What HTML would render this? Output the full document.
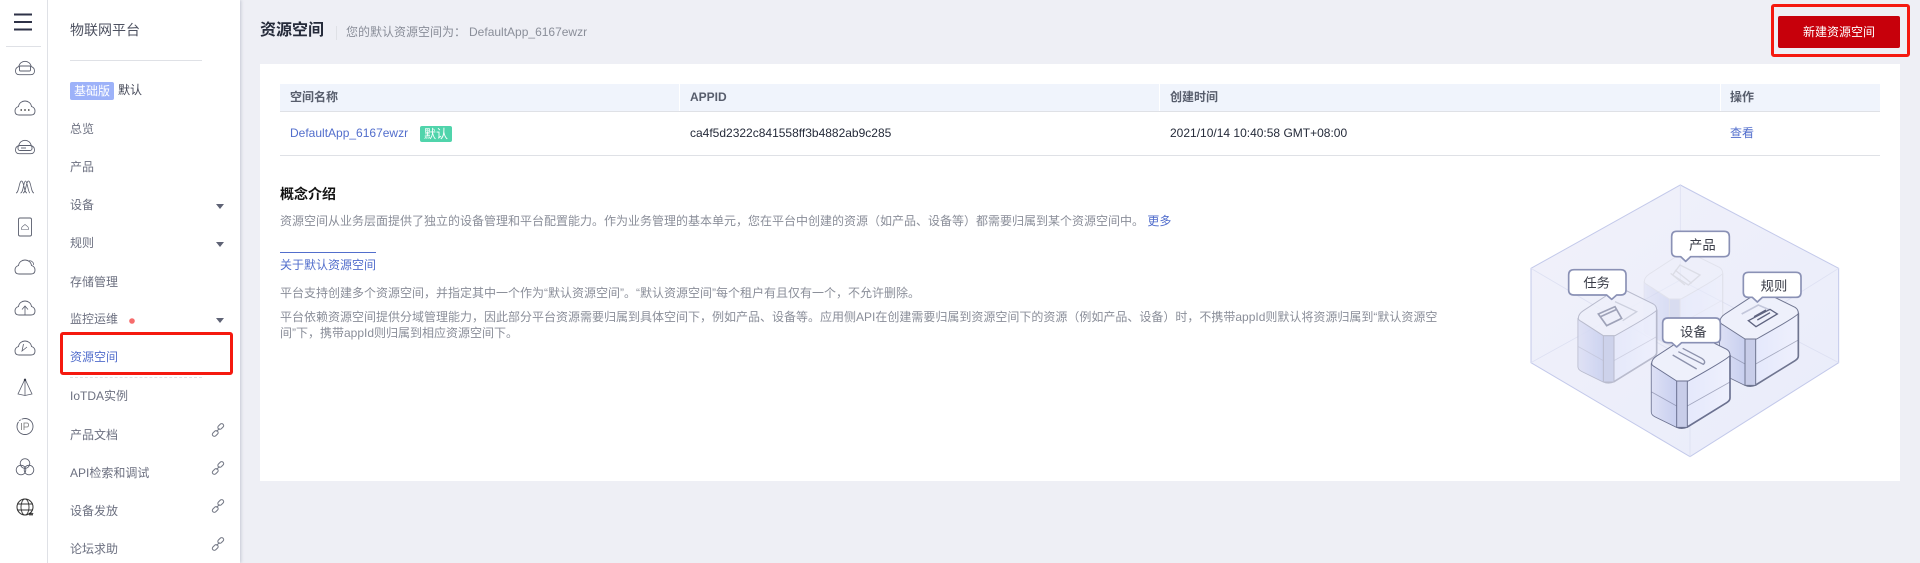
<!DOCTYPE html>
<html lang="zh-CN"><head><meta charset="utf-8"><title>资源空间</title>
<style>
html,body{margin:0;padding:0;width:1920px;height:563px;overflow:hidden;background:#eeeff5;font-family:"Liberation Sans","Noto Sans CJK SC",sans-serif;font-size:12px;color:#575d6c}
.a{position:absolute;white-space:nowrap;line-height:16px;height:16px}
.n{left:70px;color:#6c7080}
.b{position:absolute}
.g{color:#8a8e99}
.l{color:#526ecc}
.h{color:#575d6c;font-weight:bold}
.r{box-sizing:border-box;border:3px solid #f5190f;border-radius:3px}
svg{position:absolute;overflow:visible}
</style></head><body>
<div class="b" style="left:0;top:0;width:240px;height:563px;background:#fff;box-shadow:1px 0 3px rgba(120,125,150,.35)"></div>
<div class="b" style="left:47px;top:0;width:1px;height:563px;background:#dfe1e6"></div>
<div class="b" style="left:6px;top:46px;width:35px;height:1px;background:#dfe1e6"></div>
<svg style="left:0;top:0" width="48" height="563" fill="none" stroke="#5b5f6e" stroke-width=".9">
<defs><path id="c" d="M-6 7H6C9 7 10 5 10 3 10 0 8-1 6.5-1.500 6-5 3-7 0-7-3-7-6-5-6.500-1.500-8-1-10 0-10 3-10 5-9 7-6 7Z"/></defs>
<path d="M14 14.500H32M14 22H32M14 29.500H32" stroke="#2e3247" stroke-width="2"/>
<g transform="translate(25,68)"><use href="#c" transform="scale(.95)"/><rect x="-5.500" y="-2" width="11" height="5" rx="1"/></g>
<g transform="translate(25,108)"><use href="#c"/><path d="M-4.500 2h1.500M-.8 2h1.600M3 2h1.500" stroke-width="1.600" stroke="#444"/></g>
<g transform="translate(25,147)"><use href="#c" transform="scale(.95)"/><rect x="-7" y="-1.500" width="14" height="5" rx="2" fill="#fff"/><path d="M-4 1h5"/></g>
<path d="M16 193C19 193 19 181 21.500 181S24 193 27 193M20.500 193C23.500 193 23.500 181 25.500 181S28 193 30 193M23 193C26 193 26 181 28.500 181S31 193 34 193" stroke-width=".8"/>
<g><rect x="18.500" y="218" width="13" height="18" rx="1.500"/><path d="M21.500 229.500H28.500C29 227 27 226 25 224.500 23 226 21 227 21.500 229.500Z" stroke-width=".6"/></g>
<g transform="translate(25,267)"><use href="#c"/><path d="M3-6C7-7 9-4 8.500-2" stroke-width=".7"/></g>
<g transform="translate(25,308)"><use href="#c"/><path d="M-3 1.500 0-2 3 1.500M0-2V7" stroke-width=".8"/></g>
<g transform="translate(25,348)"><use href="#c"/><path d="M-1.500-4-3 3 2-1" stroke-width=".8"/></g>
<path d="M25 379 18 394 25 395.500 32 394ZM25 379V395.500" stroke-width=".8"/><circle cx="25" cy="380" r="1.200" fill="#3a3e4c" stroke="none"/>
<circle cx="25" cy="426.500" r="8" stroke-width=".9" stroke-dasharray="30 1 2 1"/><path d="M21.500 423V430M24 430V423H27C29 423 29 427 27 427H24" stroke-width=".8" stroke="#777"/>
<circle cx="25" cy="463.500" r="4.800"/><circle cx="21" cy="470" r="4.800"/><circle cx="29" cy="470" r="4.800"/>
<circle cx="25" cy="507" r="8" stroke="#333" stroke-width="1"/><ellipse cx="25" cy="507" rx="4" ry="8" stroke="#333"/><path d="M17 504H33M17 510H33" stroke="#333"/><path d="M29 513l1 2 1-2 1 2 1-2" stroke="#222" stroke-width="1"/>
</svg>

<div class="a" style="left:70px;top:22px;font-size:14px;color:#4d5160">物联网平台</div>
<div class="b" style="left:70px;top:60px;width:132px;height:1px;background:#dfe1e6"></div>
<div class="a" style="left:70px;top:82px;width:44px;height:18px;line-height:18px;text-align:center;background:#9db2f9;border-radius:2px;color:#fff">基础版</div>
<div class="a" style="left:118px;top:82px;color:#444857">默认</div>
<div class="a n" style="top:121px">总览</div>
<div class="a n" style="top:159px">产品</div>
<div class="a n" style="top:197px">设备</div>
<div class="a n" style="top:235px">规则</div>
<div class="a n" style="top:274px">存储管理</div>
<div class="a n" style="top:311px">监控运维</div>
<div class="a n l" style="top:349px">资源空间</div>
<div class="b" style="left:70px;top:377px;width:132px;border-top:1px dashed #dfe1e6"></div>
<div class="a n" style="top:388px">IoTDA实例</div>
<div class="a n" style="top:427px">产品文档</div>
<div class="a n" style="top:465px">API检索和调试</div>
<div class="a n" style="top:503px">设备发放</div>
<div class="a n" style="top:541px">论坛求助</div>
<svg style="left:0;top:0" width="240" height="563" fill="#5f6375">
<path d="M216 204H224L220 209ZM216 242H224L220 247ZM216 318H224L220 323Z"/>
<circle cx="132" cy="321" r="2.800" fill="#f66c6c"/>
<defs><g id="k" fill="none" stroke="#777b88" stroke-width="1.100"><rect x="-.5" y="-5.500" width="6.500" height="4" rx="2" transform="rotate(-45 2.750 -3.500)"/><rect x="-6" y="1.500" width="6.500" height="4" rx="2" transform="rotate(-45 -2.750 3.500)"/><path d="M-1.500 1.500 1.500-1.500"/></g></defs>
<use href="#k" x="218" y="430"/><use href="#k" x="218" y="468"/><use href="#k" x="218" y="506"/><use href="#k" x="218" y="544"/>
</svg>
<div class="b r" style="left:60px;top:332px;width:173px;height:43px"></div>

<div class="a" style="left:260px;top:21px;height:20px;line-height:20px;font-size:16px;font-weight:bold;color:#252b3a">资源空间</div>
<div class="b" style="left:336px;top:26px;width:1px;height:14px;background:#dfe1e6"></div>
<div class="a g" style="left:346px;top:24px">您的默认资源空间为：<span style="margin-left:3px">DefaultApp_6167ewzr</span></div>
<div class="b r" style="left:1771px;top:4px;width:139px;height:53px"></div>
<div class="a" style="left:1778px;top:16px;width:122px;height:32px;line-height:32px;background:#c7000b;border-radius:2px;color:#fff;text-align:center">新建资源空间</div>

<div class="b" style="left:260px;top:64px;width:1640px;height:417px;background:#fff"></div>
<div class="b" style="left:280px;top:84px;width:1600px;height:27px;background:#f0f4fc;border-bottom:1px solid #dfe1e6"></div>
<div class="b" style="left:679px;top:84px;width:1px;height:27px;background:#fff"></div>
<div class="b" style="left:1159px;top:84px;width:1px;height:27px;background:#fff"></div>
<div class="b" style="left:1720px;top:84px;width:1px;height:27px;background:#fff"></div>
<div class="a h" style="left:290px;top:89px">空间名称</div>
<div class="a h" style="left:690px;top:89px">APPID</div>
<div class="a h" style="left:1170px;top:89px">创建时间</div>
<div class="a h" style="left:1730px;top:89px">操作</div>
<div class="a l" style="left:290px;top:125px">DefaultApp_6167ewzr</div>
<div class="a" style="left:420px;top:126px;width:32px;text-align:center;background:#50d4ab;color:#fff;border-radius:2px">默认</div>
<div class="a" style="left:690px;top:125px;color:#252b3a">ca4f5d2322c841558ff3b4882ab9c285</div>
<div class="a" style="left:1170px;top:125px;color:#252b3a">2021/10/14 10:40:58 GMT+08:00</div>
<div class="a l" style="left:1730px;top:125px">查看</div>
<div class="b" style="left:280px;top:155px;width:1600px;height:1px;background:#dfe1e6"></div>

<div class="a" style="left:280px;top:186px;font-size:14px;font-weight:bold;color:#111">概念介绍</div>
<div class="a g" style="left:280px;top:213px">资源空间从业务层面提供了独立的设备管理和平台配置能力。作为业务管理的基本单元，您在平台中创建的资源（如产品、设备等）都需要归属到某个资源空间中。 <span class="l">更多</span></div>
<div class="b" style="left:280px;top:252px;width:96px;height:1px;background:#526ecc"></div>
<div class="a l" style="left:280px;top:257px">关于默认资源空间</div>
<div class="a g" style="left:280px;top:285px">平台支持创建多个资源空间，并指定其中一个作为“默认资源空间”。“默认资源空间”每个租户有且仅有一个，不允许删除。</div>
<div class="a g" style="left:280px;top:309px">平台依赖资源空间提供分域管理能力，因此部分平台资源需要归属到具体空间下，例如产品、设备等。应用侧API在创建需要归属到资源空间下的资源（例如产品、设备）时，不携带appId则默认将资源归属到“默认资源空</div>
<div class="a g" style="left:280px;top:325px">间”下，携带appId则归属到相应资源空间下。</div>

<svg style="left:1500px;top:170px" width="400" height="300" viewBox="0 0 1200 900" fill="none" font-family="'Liberation Sans','Noto Sans CJK SC',sans-serif">
<defs>
<linearGradient id="o" x1="0" y1="0" x2="1" y2="1"><stop offset="0" stop-color="#f1f1fa"/><stop offset="1" stop-color="#e9ecfa"/></linearGradient>
<linearGradient id="s1" x1="0" y1="0" x2="1" y2="0"><stop offset="0" stop-color="#dde0f5"/><stop offset="1" stop-color="#c8cfef"/></linearGradient>
<linearGradient id="s2" x1="0" y1="0" x2="1" y2="0"><stop offset="0" stop-color="#dde2fa"/><stop offset="1" stop-color="#eef0fd"/></linearGradient>
<g id="cube" stroke-linejoin="round">
<path d="M235 445V590Q235 598 245 603L310 635Q325 642 342 635L460 562Q470 556 470 548V420Z" fill="url(#s2)"/>
<path d="M235 445V590Q235 598 245 603L310 635V497Z" fill="url(#s1)" stroke="none"/>
<path d="M310 497H342V636H310Z" fill="#c8cde9" stroke-width="3"/>
<path d="M235 530 310 572M342 572 470 500" stroke-width="2.500" stroke-opacity=".55"/>
<path d="M235 445Q235 432 250 422L345 360Q360 352 375 360L460 402Q470 408 470 420 468 428 345 497H310L245 455Q235 450 235 445Z" fill="#eef0fb" stroke-width="3"/>
</g>
</defs>
<path d="M541 45 1016 295V578L570 860 93 578V295Z" fill="url(#o)" stroke="#c3c9ea" stroke-width="3"/>
<path d="M93 295 570 575 1016 295M570 575V860M541 45V330M93 578 541 330 1016 578" stroke="#dde0f2" stroke-width="2.500"/>
<use href="#cube" x="198" y="-110" stroke="#d8d9e2" stroke-width="4" opacity=".55"/>
<path d="M540 285 600 315 565 345 518 315ZM512 310 555 345M525 300 575 340" stroke="#dcdde6" stroke-width="4"/>
<use href="#cube" stroke="#b0b3c6" stroke-width="5" opacity=".85"/>
<path d="M345 395 410 425 368 452" stroke="#cdd0de" stroke-width="4"/>
<path d="M295 432 345 410 365 445 320 467ZM302 440 350 418" stroke="#9ea2b8" stroke-width="5"/>
<use href="#cube" x="425" y="10" stroke="#6f7590" stroke-width="5"/>
<path d="M725 432 775 405 810 420" stroke="#c2c6da" stroke-width="5"/>
<path d="M745 452 810 418 832 432 768 470ZM762 440 798 420M772 450 810 428" stroke="#5f6480" stroke-width="4"/>
<use href="#cube" x="220" y="136" stroke="#6b7190" stroke-width="5"/>
<path d="M518 555 590 597M535 545 610 583Q620 575 605 565L548 535" stroke="#8d92ac" stroke-width="4"/>
<g fill="#fff" stroke="#8a91b5" stroke-width="5" stroke-linejoin="round">
<path d="M222 299H362Q378 299 378 315V360Q378 375 362 375H350L335 388 320 375H222Q206 375 206 360V315Q206 299 222 299Z"/>
<path d="M530 184H672Q688 184 688 200V245Q688 260 672 260H572L557 274 542 260H530Q515 260 515 245V200Q515 184 530 184Z"/>
<path d="M746 307H888Q903 307 903 322V367Q903 382 888 382H787L772 396 757 382H746Q730 382 730 367V322Q730 307 746 307Z"/>
<path d="M504 444H646Q661 444 661 460V504Q661 518 646 518H545L530 531 515 518H504Q488 518 488 504V460Q488 444 504 444Z"/>
</g>
<g fill="#3a3d48" font-size="40">
<text x="250" y="352">任务</text>
<text x="567" y="238">产品</text>
<text x="782" y="361">规则</text>
<text x="540" y="499">设备</text>
</g>
</svg>
</body></html>
